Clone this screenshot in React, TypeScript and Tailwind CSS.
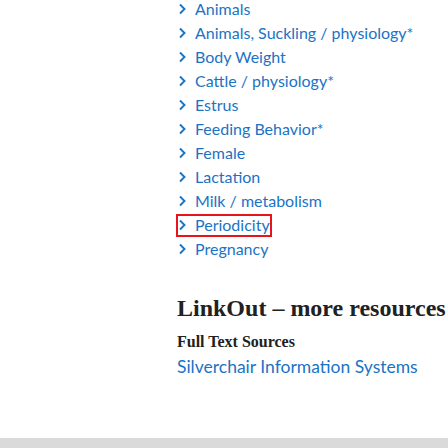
import React from "react";

const items = [
  "Animals",
  "Animals, Suckling / physiology*",
  "Body Weight",
  "Cattle / physiology*",
  "Estrus",
  "Feeding Behavior*",
  "Female",
  "Lactation",
  "Milk / metabolism",
  "Periodicity",
  "Pregnancy",
];

function Chevron() {
  return (
    <svg width="8" height="12" viewBox="0 0 8 12" className="shrink-0">
      <path d="M1 1.5 L5.5 6 L1 10.5" fill="none" stroke="#1b73c5" strokeWidth="1.9" />
    </svg>
  );
}

export default function App() {
  return (
    <div className="w-[448px] h-[448px] bg-white flex flex-col overflow-hidden">
      <div className="flex-1 pl-[177px]" style={{ fontFamily: 'Lato, "Open Sans", sans-serif' }}>
        <ul className="flex flex-col -mt-[3px]">
          {items.map((t) => (
            <li key={t} className="h-[24px] flex items-center">
              {t === "Periodicity" ? (
                <span className="-ml-[1px] flex items-center gap-[8px] h-[23px] w-[96px] pl-[1px] text-[16px] leading-[18px] text-[color:#1b73c5] border-solid border-[2px] border-[color:#e8141c]">
                  <Chevron />
                  <span>{t}</span>
                </span>
              ) : (
                <span className="flex items-center gap-[8px] h-[20px] pl-[2px] text-[16px] leading-[18px] text-[color:#1b73c5]">
                  <Chevron />
                  <span>{t}</span>
                </span>
              )}
            </li>
          ))}
        </ul>
        <h2
          className="mt-[33px] text-[24px] leading-[28px] text-[color:#212121] font-bold"
          style={{ fontFamily: '"Liberation Serif", serif' }}
        >
          LinkOut – more resources
        </h2>
        <h3
          className="mt-[10px] text-[16px] leading-[20px] font-bold text-[color:#212121]"
          style={{ fontFamily: '"Liberation Serif", serif' }}
        >
          Full Text Sources
        </h3>
        <div className="mt-[3px] text-[17.5px] leading-[24px] text-[color:#1b73c5]">Silverchair Information Systems</div>
      </div>
      <div className="h-[10px] bg-[#dadada]" />
    </div>
  );
}
